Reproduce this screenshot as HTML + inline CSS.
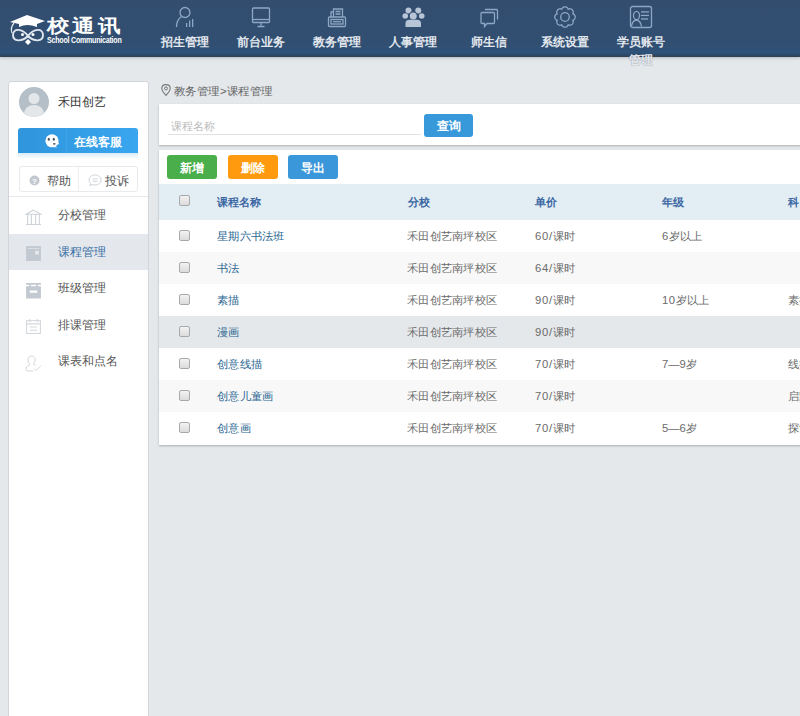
<!DOCTYPE html>
<html><head><meta charset="utf-8">
<style>
*{margin:0;padding:0;box-sizing:border-box}
html,body{width:800px;height:716px;overflow:hidden}
body{background:#e4e8eb;font-family:"Liberation Sans",sans-serif;font-size:12px;color:#555;position:relative}
.abs{position:absolute}
#hdr{left:0;top:0;width:800px;height:57px;background:linear-gradient(#334d6e 0,#314f72 45px,#2e527a 53px,#2e4560 55.5px,#36404c 57px);box-shadow:0 1px 3px rgba(40,50,70,.25)}
.nav{position:absolute;top:0;width:76px;height:56px;text-align:center;color:#e3e8ee;font-weight:bold;font-size:12px}
.nav svg{position:absolute;left:28px;top:6px}
.nav span{position:absolute;left:14px;width:48px;top:33px;line-height:18px;display:block}
#side{left:8px;top:81px;width:141px;height:640px;background:#fff;border:1px solid #d2d6da;border-radius:3px 3px 0 0}
.mi{position:absolute;left:0;width:139px;height:36.5px;}
.mi span{position:absolute;left:48.5px;top:11px;font-size:12px;color:#555;line-height:14px}
.mi svg{position:absolute;left:15.6px;top:11.5px;width:17px;height:17px}
.panel{position:absolute;background:#fff;box-shadow:0 1px 2px rgba(0,0,0,.25)}
.btn{position:absolute;height:24px;width:50px;border-radius:3px;color:#fff;font-size:12px;font-weight:bold;text-align:center;line-height:26px}
.th{position:absolute;font-size:11px;font-weight:bold;color:#3d67a3;line-height:14px}
.row{position:absolute;left:0;width:700px;height:32px}
.row .c{position:absolute;top:9px;font-size:11px;line-height:14px;color:#6a6a6a;transform:scaleX(1.025);transform-origin:0 0;white-space:nowrap}
.row .n{color:#2b6792}
.cb{position:absolute;left:19.5px;width:11px;height:11px;border:1px solid #a9a9a9;border-radius:2px;background:linear-gradient(#f2f2f2,#dcdcdc)}
</style></head><body>

<div id="hdr" class="abs">
  <!-- logo -->
  <svg class="abs" style="left:8px;top:12px" width="40" height="34" viewBox="0 0 40 34">
    <path d="M2 10 L19 3 L37 9 L29 12 L29 15 Q19 11 11 15 L11 12 Z" fill="#fff"/>
    <path d="M6 11 Q2 16 4 21" stroke="#dfe6ee" stroke-width="1.3" fill="none"/>
    <path d="M20 24 C14 16 5 16 5 23 C5 30 14 30 20 24 C26 16 35 16 35 23 C35 30 26 30 20 24 Z" stroke="#dfe6ee" stroke-width="1.9" fill="none"/>
    <circle cx="14.5" cy="22.5" r="1.5" fill="#fff"/><circle cx="25" cy="22.5" r="1.5" fill="#fff"/>
    <path d="M20 27 L23 30 L20 33 L17 30 Z" fill="#fff"/>
  </svg>
  <div class="abs" style="left:46.5px;top:15.7px;font-size:23px;font-weight:bold;color:#fff;letter-spacing:2.5px;line-height:24px;transform:scaleY(0.8);transform-origin:0 0">校通讯</div>
  <div class="abs" style="left:47px;top:35px;font-size:9.5px;font-weight:bold;color:#fff;line-height:10px;letter-spacing:-0.3px;transform:scaleX(0.745);transform-origin:0 0">School Communication</div>

  <div class="nav" style="left:147px">
    <svg width="20" height="22" viewBox="0 0 20 22"><g stroke="#8ea7c5" stroke-width="1.3" fill="none"><circle cx="10" cy="6.5" r="5"/><path d="M6.5 10.5 Q1.5 14 1.5 21"/></g><g fill="#8ea7c5"><rect x="11" y="17" width="1.3" height="4"/><rect x="14" y="14.5" width="1.3" height="6.5"/><rect x="17" y="13" width="1.3" height="8"/></g></svg>
    <span>招生管理</span></div>
  <div class="nav" style="left:223px">
    <svg width="20" height="22" viewBox="0 0 20 22"><g stroke="#8ea7c5" stroke-width="1.3" fill="none"><rect x="1.5" y="2" width="17" height="14.5" rx="1"/><path d="M1.5 13.5 H18.5"/><path d="M10 16.5 V19.5 M6.5 20.5 H13.5"/></g></svg>
    <span>前台业务</span></div>
  <div class="nav" style="left:299px">
    <svg width="20" height="22" viewBox="0 0 20 22"><g stroke="#8ea7c5" stroke-width="1.3" fill="none"><rect x="1.5" y="11" width="17" height="9.5" rx="1"/><rect x="4" y="13.5" width="12" height="4.5"/><path d="M6.5 11 V3 H15.5 V11 M6.5 6 H4 V11 M8.5 5.5 H13.5 M8.5 8 H13.5"/></g><path d="M6 15.7 H14" stroke="#8ea7c5" stroke-width="1.3"/></svg>
    <span>教务管理</span></div>
  <div class="nav" style="left:375px">
    <svg width="24" height="22" viewBox="0 0 24 22" style="left:26px"><g fill="#b8c5d6"><circle cx="7.5" cy="4.5" r="3"/><circle cx="17.25" cy="4.5" r="3"/><circle cx="4.25" cy="10" r="2.8"/><circle cx="20.75" cy="10" r="2.8"/></g><g fill="#324f70"><circle cx="12.25" cy="10" r="4.6"/><path d="M2.5 21.5 V16 Q3 12.3 8 12.5 H16.5 Q21.5 12.3 22 16 V21.5 Z"/></g><g fill="#b8c5d6"><circle cx="12.25" cy="10" r="3.5"/><path d="M4.5 21 V17.5 Q4.5 13.8 8.5 13.8 H16 Q20 13.8 20 17.5 V21 Z"/></g></svg>
    <span>人事管理</span></div>
  <div class="nav" style="left:451px">
    <svg width="20" height="22" viewBox="0 0 20 22"><g stroke="#8ea7c5" stroke-width="1.3" fill="none"><path d="M6 3.5 H17.5 Q18.5 3.5 18.5 4.5 V13.5"/><path d="M3 6.5 H14.5 Q15.5 6.5 15.5 7.5 V16.5 Q15.5 17.5 14.5 17.5 H8 L5.5 20.5 V17.5 H3 Q2 17.5 2 16.5 V7.5 Q2 6.5 3 6.5 Z"/></g></svg>
    <span>师生信</span></div>
  <div class="nav" style="left:527px">
    <svg width="22" height="22" viewBox="0 0 22 22" style="left:27px"><g stroke="#8ea7c5" stroke-width="1.3" fill="none"><path d="M11.00 0.80L11.40 0.82L11.80 0.89L12.18 1.01L12.56 1.17L12.91 1.38L13.25 1.63L13.56 1.92L13.84 2.26L14.08 2.66L14.21 3.24L14.72 2.93L15.17 2.81L15.61 2.77L16.04 2.78L16.45 2.84L16.85 2.95L17.23 3.10L17.58 3.29L17.91 3.52L18.21 3.79L18.48 4.09L18.71 4.42L18.90 4.77L19.05 5.15L19.16 5.55L19.22 5.96L19.23 6.39L19.19 6.83L19.07 7.28L18.76 7.79L19.34 7.92L19.74 8.16L20.08 8.44L20.37 8.75L20.62 9.09L20.83 9.44L20.99 9.82L21.11 10.20L21.18 10.60L21.20 11.00L21.18 11.40L21.11 11.80L20.99 12.18L20.83 12.56L20.62 12.91L20.37 13.25L20.08 13.56L19.74 13.84L19.34 14.08L18.76 14.21L19.07 14.72L19.19 15.17L19.23 15.61L19.22 16.04L19.16 16.45L19.05 16.85L18.90 17.23L18.71 17.58L18.48 17.91L18.21 18.21L17.91 18.48L17.58 18.71L17.23 18.90L16.85 19.05L16.45 19.16L16.04 19.22L15.61 19.23L15.17 19.19L14.72 19.07L14.21 18.76L14.08 19.34L13.84 19.74L13.56 20.08L13.25 20.37L12.91 20.62L12.56 20.83L12.18 20.99L11.80 21.11L11.40 21.18L11.00 21.20L10.60 21.18L10.20 21.11L9.82 20.99L9.44 20.83L9.09 20.62L8.75 20.37L8.44 20.08L8.16 19.74L7.92 19.34L7.79 18.76L7.28 19.07L6.83 19.19L6.39 19.23L5.96 19.22L5.55 19.16L5.15 19.05L4.77 18.90L4.42 18.71L4.09 18.48L3.79 18.21L3.52 17.91L3.29 17.58L3.10 17.23L2.95 16.85L2.84 16.45L2.78 16.04L2.77 15.61L2.81 15.17L2.93 14.72L3.24 14.21L2.66 14.08L2.26 13.84L1.92 13.56L1.63 13.25L1.38 12.91L1.17 12.56L1.01 12.18L0.89 11.80L0.82 11.40L0.80 11.00L0.82 10.60L0.89 10.20L1.01 9.82L1.17 9.44L1.38 9.09L1.63 8.75L1.92 8.44L2.26 8.16L2.66 7.92L3.24 7.79L2.93 7.28L2.81 6.83L2.77 6.39L2.78 5.96L2.84 5.55L2.95 5.15L3.10 4.77L3.29 4.42L3.52 4.09L3.79 3.79L4.09 3.52L4.42 3.29L4.77 3.10L5.15 2.95L5.55 2.84L5.96 2.78L6.39 2.77L6.83 2.81L7.28 2.93L7.79 3.24L7.92 2.66L8.16 2.26L8.44 1.92L8.75 1.63L9.09 1.38L9.44 1.17L9.82 1.01L10.20 0.89L10.60 0.82L11.00 0.80Z"/><circle cx="11" cy="11" r="4.3"/></g></svg>
    <span>系统设置</span></div>
  <div class="nav" style="left:603px">
    <svg width="24" height="24" viewBox="0 0 24 24" style="left:26px;top:5px"><g stroke="#8ea7c5" stroke-width="1.3" fill="none"><rect x="1.5" y="1.5" width="21" height="21" rx="2"/><ellipse cx="7.5" cy="10.5" rx="3" ry="4.2"/><path d="M2.5 21 Q3.5 15.5 7.5 15 Q11.5 15.5 12.5 21.5"/></g><g fill="#8ea7c5"><rect x="12" y="6.3" width="8" height="1.3"/><rect x="12" y="9.8" width="8" height="1.3"/><rect x="12" y="13.3" width="7" height="1.3"/></g></svg>
    <span>学员账号<b style="font-weight:bold;text-shadow:0 0 1px rgba(60,70,85,.6)">管理</b></span></div>
</div>

<!-- sidebar -->
<div id="side" class="abs">
  <svg class="abs" style="left:9.5px;top:4.5px" width="30" height="30" viewBox="0.5 0.5 30 30"><circle cx="15.5" cy="15.5" r="15" fill="#b5bfc8"/><circle cx="15.5" cy="12" r="5.5" fill="#e3e7ea"/><path d="M5.5 26 Q7.5 18.5 15.5 18.5 Q23.5 18.5 25.5 26 Q21 30.5 15.5 30.5 Q10 30.5 5.5 26Z" fill="#e3e7ea"/></svg>
  <div class="abs" style="left:49px;top:13px;font-size:12px;color:#333;line-height:14px">禾田创艺</div>
  <div class="abs" style="left:9px;top:45.5px;width:120px;height:25.5px;border-radius:3px 3px 0 0;background:linear-gradient(90deg,#2f95dd,#39a6ef)"></div>
  <div class="abs" style="left:9px;top:71px;width:120px;height:6px;background:linear-gradient(#d7ebf8,#fff)"></div>
  <svg class="abs" style="left:35.5px;top:52px" width="15" height="15" viewBox="0 0 15 15"><ellipse cx="7" cy="6.8" rx="6.6" ry="6.5" fill="#fff"/><path d="M9.5 11.5 L12.3 13.6 L7.5 13 Z" fill="#fff"/><ellipse cx="3.8" cy="5.3" rx="1.1" ry="1.5" fill="#4a5866"/><ellipse cx="8.8" cy="5.3" rx="1.1" ry="1.5" fill="#4a5866"/><ellipse cx="9.3" cy="9.8" rx="1.3" ry="0.9" fill="#4a5866"/><circle cx="12.8" cy="9.6" r="1.1" fill="#fff"/></svg>
  <div class="abs" style="left:56.5px;top:46px;width:1px;height:25px;background:#3ea4ea"></div>
  <div class="abs" style="left:65px;top:53px;font-size:12px;font-weight:bold;color:#fff;line-height:14px">在线客服</div>
  <div class="abs" style="left:10px;top:83.5px;width:119px;height:26.5px;border:1px solid #e8eaec;border-radius:3px"></div>
  <div class="abs" style="left:68.5px;top:84.5px;width:1px;height:24.5px;background:#eceef0"></div>
  <svg class="abs" style="left:20px;top:93px" width="11" height="11" viewBox="0 0 11 11"><circle cx="5.5" cy="5.5" r="5" fill="#c2c8d0"/><text x="5.5" y="8.6" font-size="8" font-family="Liberation Sans" font-weight="bold" fill="#fff" text-anchor="middle">?</text></svg>
  <div class="abs" style="left:38px;top:92px;font-size:12px;color:#555;line-height:14px">帮助</div>
  <svg class="abs" style="left:79px;top:92px" width="14" height="13" viewBox="0 0 14 13"><path d="M7 1 C10.5 1 13 3.2 13 6 C13 8.8 10.5 11 7 11 C6 11 5 10.8 4 10.4 L2 12 L2.5 9.5 C1.5 8.5 1 7.3 1 6 C1 3.2 3.5 1 7 1Z" stroke="#cfd4da" stroke-width="1" fill="none"/><path d="M4.5 5 H9.5 M4.5 7.3 H9.5" stroke="#cfd4da" stroke-width="1"/></svg>
  <div class="abs" style="left:96px;top:92px;font-size:12px;color:#555;line-height:14px">投诉</div>
  <div class="abs" style="left:0;top:114px;width:139px;height:1px;background:#e6e8ea"></div>

  <div class="mi" style="top:115px">
    <svg width="16" height="16" viewBox="0 0 16 16"><g stroke="#cdd2d8" stroke-width="1" fill="none"><path d="M1 5 L8 1 L15 5 Z"/><path d="M2.5 5 V14.5 M6 5 V14.5 M10 5 V14.5 M13.5 5 V14.5 M1 14.5 H15"/></g></svg>
    <span>分校管理</span></div>
  <div class="mi" style="top:151.5px;background:#e4e8ec">
    <svg width="16" height="16" viewBox="0 0 16 16"><path d="M1 1 H15 V15 H1 Z" fill="#c3c9d1"/><path d="M2.5 3 H13.5 V3.8 H2.5Z M9.5 5.5 H13 V9 H9.5Z" fill="#e4e8ec"/></svg>
    <span style="color:#3a6ea5">课程管理</span></div>
  <div class="mi" style="top:188px">
    <svg width="16" height="16" viewBox="0 0 16 16"><path d="M1 1 H15 V2.5 H12 V4 H15 V15.5 H1 V4 H4 V2.5 H1 Z" fill="#c3c9d1"/><path d="M5.5 2.5 H10.5 V4 H5.5Z M4.5 8 H11.5 V10 H4.5Z" fill="#fff"/></svg>
    <span>班级管理</span></div>
  <div class="mi" style="top:224.5px">
    <svg width="16" height="16" viewBox="0 0 16 16"><g stroke="#d3d7dc" stroke-width="1" fill="none"><rect x="1.5" y="2.5" width="13" height="12"/><path d="M1.5 5.5 H14.5 M4.5 1 V4 M11.5 1 V4 M4.5 8.5 H11.5 M4.5 11.5 H11.5"/></g></svg>
    <span>排课管理</span></div>
  <div class="mi" style="top:261px">
    <svg width="17" height="17" viewBox="0 0 17 17"><g stroke="#d3d7dc" stroke-width="1" fill="none"><path d="M6.5 1 C9.5 1 10.5 3.5 10 6 C9.5 8 8 9 8 9 C10 9.5 11 10.5 11 10.5 M5 9 C5 9 3 8 3 5 C3 2.5 4.5 1 6.5 1 M5 9.5 C2 10.5 1 13 1 14.5 Q1 16 3 16 H8"/><path d="M9 13.5 L11 15.5 L16 10.5"/></g></svg>
    <span>课表和点名</span></div>
</div>

<!-- breadcrumb -->
<svg class="abs" style="left:161px;top:84px" width="10" height="12" viewBox="0 0 10 12"><path d="M5 11.3 C2.5 8.5 0.8 6.5 0.8 4.4 C0.8 2.1 2.7 0.6 5 0.6 C7.3 0.6 9.2 2.1 9.2 4.4 C9.2 6.5 7.5 8.5 5 11.3Z" stroke="#777" stroke-width="1.1" fill="none"/><circle cx="5" cy="4.4" r="1.5" stroke="#777" stroke-width="1" fill="none"/></svg>
<div class="abs" style="left:174px;top:84px;font-size:11px;color:#5a5a5a;transform:scaleX(1.045);transform-origin:0 0;color:#666;line-height:14px">教务管理&gt;课程管理</div>

<!-- search panel -->
<div class="panel" style="left:159px;top:104px;width:700px;height:41px">
  <div class="abs" style="left:12px;top:15px;font-size:11px;color:#bbb;line-height:14px">课程名称</div>
  <div class="abs" style="left:9px;top:30px;width:253px;height:1px;background:#e2e2e2"></div>
  <div class="btn" style="left:265px;top:10px;width:49px;height:23px;line-height:25px;background:#3798da">查询</div>
</div>

<!-- table panel -->
<div class="panel" style="left:159px;top:150px;width:700px;height:295px">
  <div class="btn" style="left:8px;top:5px;background:#4aae4b">新增</div>
  <div class="btn" style="left:69px;top:5px;background:#ff9a0e">删除</div>
  <div class="btn" style="left:129px;top:5px;background:#3a97d9">导出</div>
  <div class="abs" style="left:0;top:34px;width:700px;height:36px;background:#e2eef3">
    <div class="cb" style="top:10.5px"></div>
    <div class="th" style="left:58px;top:11px">课程名称</div>
    <div class="th" style="left:249px;top:11px">分校</div>
    <div class="th" style="left:376px;top:11px">单价</div>
    <div class="th" style="left:503px;top:11px">年级</div>
    <div class="th" style="left:629px;top:11px">科</div>
  </div>
  <div class="abs" style="left:0;top:70px;width:700px">
    <div class="row" style="top:0;background:#fff"><div class="cb" style="top:9.5px"></div><div class="c n" style="left:58px">星期六书法班</div><div class="c" style="left:248px">禾田创艺南坪校区</div><div class="c" style="left:376px"><span style="letter-spacing:.7px">60/</span>课时</div><div class="c" style="left:503px"><span style="letter-spacing:.5px">6</span>岁以上</div></div>
    <div class="row" style="top:32px;background:#f8f8f8"><div class="cb" style="top:9.5px"></div><div class="c n" style="left:58px">书法</div><div class="c" style="left:248px">禾田创艺南坪校区</div><div class="c" style="left:376px"><span style="letter-spacing:.7px">64/</span>课时</div></div>
    <div class="row" style="top:64px;background:#fff"><div class="cb" style="top:9.5px"></div><div class="c n" style="left:58px">素描</div><div class="c" style="left:248px">禾田创艺南坪校区</div><div class="c" style="left:376px"><span style="letter-spacing:.7px">90/</span>课时</div><div class="c" style="left:503px"><span style="letter-spacing:.5px">10</span>岁以上</div><div class="c" style="left:629px">素描</div></div>
    <div class="row" style="top:96px;background:#e5e8eb"><div class="cb" style="top:9.5px"></div><div class="c n" style="left:58px">漫画</div><div class="c" style="left:248px">禾田创艺南坪校区</div><div class="c" style="left:376px"><span style="letter-spacing:.7px">90/</span>课时</div></div>
    <div class="row" style="top:128px;background:#fff"><div class="cb" style="top:9.5px"></div><div class="c n" style="left:58px">创意线描</div><div class="c" style="left:248px">禾田创艺南坪校区</div><div class="c" style="left:376px"><span style="letter-spacing:.7px">70/</span>课时</div><div class="c" style="left:503px">7—9岁</div><div class="c" style="left:629px">线描</div></div>
    <div class="row" style="top:160px;background:#f8f8f8"><div class="cb" style="top:9.5px"></div><div class="c n" style="left:58px">创意儿童画</div><div class="c" style="left:248px">禾田创艺南坪校区</div><div class="c" style="left:376px"><span style="letter-spacing:.7px">70/</span>课时</div><div class="c" style="left:629px">启蒙</div></div>
    <div class="row" style="top:192px;background:#fff"><div class="cb" style="top:9.5px"></div><div class="c n" style="left:58px">创意画</div><div class="c" style="left:248px">禾田创艺南坪校区</div><div class="c" style="left:376px"><span style="letter-spacing:.7px">70/</span>课时</div><div class="c" style="left:503px">5—6岁</div><div class="c" style="left:629px">探索</div></div>
  </div>
</div>


</body></html>
